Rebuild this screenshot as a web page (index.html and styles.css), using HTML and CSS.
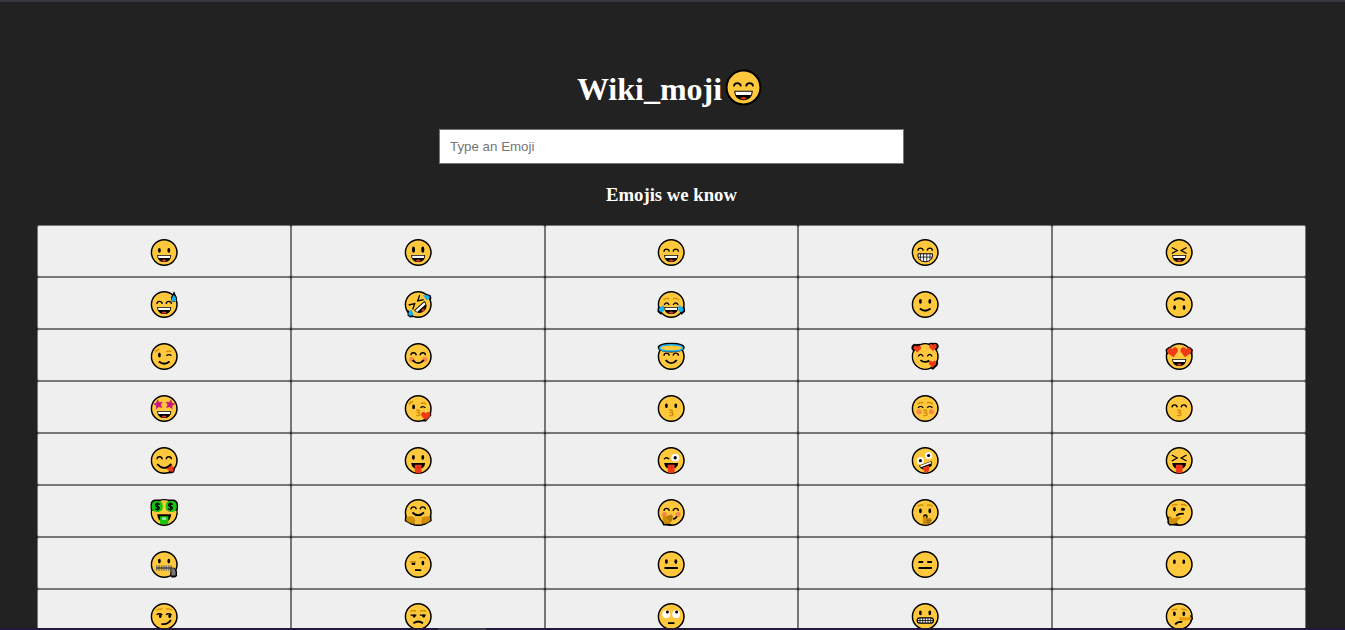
FILE: index.html
```html
<!DOCTYPE html>
<html lang="en">
<head>
<meta charset="utf-8">
<title>Wiki_moji</title>
<link rel="stylesheet" href="styles.css">
</head>
<body>
<svg class="defs" aria-hidden="true">
  <defs>
    <circle id="face" cx="14" cy="14" r="12.8" fill="#ffc83d" stroke="#000" stroke-width="1.5"/>
    <g id="eyes"><ellipse cx="9.2" cy="11.9" rx="1.4" ry="2.3"/><ellipse cx="18.6" cy="11.9" rx="1.4" ry="2.3"/></g>
    <g id="tall"><ellipse cx="9.3" cy="11.1" rx="1.5" ry="3.2"/><ellipse cx="18.6" cy="11.1" rx="1.5" ry="3.2"/></g>
    <path id="happy" class="ln" d="M6.7 13.2C7 9.8 11.6 9.8 12.1 13.2M15.9 13.2C16.4 9.8 21 9.8 21.3 13.2"/>
    <path id="squint" class="ln" d="M6.6 9L12 12L6.6 15M21.4 9L16 12L21.4 15"/>
    <g id="grin"><path d="M7 16.4H21C21 20.7 18.2 23.6 14 23.6S7 20.7 7 16.4Z"/><path d="M7.8 17.2H20.2L19.7 19.6H8.3Z" fill="#fff"/><path d="M11.4 22.4Q14 19.8 16.6 22.4Q14 23.7 11.4 22.4Z" fill="#f03a17"/></g>
    <path id="smile" class="ln th" d="M8.6 18Q14 22.4 19.4 18"/>
    <path id="bigsmile" class="ln th" d="M8.4 17.6Q14 23.6 19.6 17.6"/>
    <path id="brows" class="br" d="M6.4 8.9Q8.5 7 12.2 7.8M21.6 8.9Q19.5 7 15.8 7.8"/>
    <path id="kiss" class="br" d="M12 15.7H14.6Q16.5 17.1 13.7 18.1Q17 18.8 15.3 20.7Q14 21.5 12 20.9"/>
    <path id="heart" d="M0 3.6L-3.5 .2C-4.6-1.6-3-3.7-1.1-3.1L0-2.2L1.1-3.1C3-3.7 4.6-1.6 3.5 .2Z" fill="#f03a17"/>
    <path id="star" d="M0-5L1.5-1.7L5-1.3L2.4 1.1L3.3 4.6L0 2.9L-3.3 4.6L-2.4 1.1L-5-1.3L-1.5-1.7Z" fill="#c8177e"/>
    <g id="tongue"><path d="M7 16.5H21Q20.8 20 18.2 21.7H9.8Q7.2 20 7 16.5Z"/><path d="M10.6 18.3H17.4V24.2Q17.2 26.8 14 26.8T10.6 24.2Z" fill="#f03a17"/><path d="M14 19.8V22.5" stroke="#bd1d14" stroke-width=".8"/></g>
  </defs>
</svg>

<div class="edge-top"></div>
<main class="page">
  <h1 class="title"><span class="title-text">Wiki_moji</span><svg class="title-emoji" viewBox="0 0 28 28"><use href="#face"/><use href="#happy"/><use href="#grin"/></svg></h1>
  <input class="search" type="text" placeholder="Type an Emoji">
  <h3 class="subtitle">Emojis we know</h3>
  <div class="grid">
    <button class="cell"><svg class="emoji" viewBox="0 0 28 28"><use href="#face"/><use href="#eyes"/><use href="#grin"/></svg></button>
    <button class="cell"><svg class="emoji" viewBox="0 0 28 28"><use href="#face"/><use href="#tall"/><use href="#grin"/></svg></button>
    <button class="cell"><svg class="emoji" viewBox="0 0 28 28"><use href="#face"/><use href="#happy"/><use href="#grin"/></svg></button>
    <button class="cell"><svg class="emoji" viewBox="0 0 28 28"><use href="#face"/><use href="#happy" y="-1"/><path d="M6.8 15.3H21.2V18C20.8 25 7.2 25 6.8 18Z" fill="#fff" stroke="#000"/><path d="M7 18.6H21M9.2 15V21.5M12.4 15V23M15.6 15V23M18.8 15V21.5" fill="none" stroke="#000" stroke-width=".8"/></svg></button>
    <button class="cell"><svg class="emoji" viewBox="0 0 28 28"><use href="#face"/><use href="#squint"/><use href="#grin"/></svg></button>

    <button class="cell"><svg class="emoji" viewBox="0 0 28 28"><use href="#face"/><use href="#happy" y=".2"/><use href="#grin"/><path d="M23.8 .8L20.8 7Q20.5 11.2 23.7 11.4Q27.4 10.7 26.7 7Z"/><path d="M23.7 4.4Q20.6 8.2 21.5 9.7Q23.7 12.3 25.9 9.8Q26.5 7.7 23.7 4.4Z" fill="#18aef2"/></svg></button>
    <button class="cell"><svg class="emoji" viewBox="0 0 28 28"><use href="#face"/><g transform="rotate(-42 14 14)"><use href="#squint" y="-1"/><use href="#grin" y="-.8"/></g><path d="M22 3L26.7 5L27.2 8.3L25.5 10ZM3.5 19L3.3 25L5.8 27L9.5 26.4Z"/><path d="M18.7 4.9Q24.6 3.6 25.6 6.4Q25.4 9.3 22.6 9.4ZM7 19Q3.4 21.7 4.5 24.7Q8.2 26.4 9.1 23.2Z" fill="#18aef2"/></svg></button>
    <button class="cell"><svg class="emoji" viewBox="0 0 28 28"><use href="#face"/><use href="#brows" y=".3"/><path class="ln" d="M7 14.4Q9.4 10.5 12 14.4M16 14.4Q18.6 10.5 21 14.4"/><use href="#grin"/><path d="M1.4 15L.2 18.5V21.3L4 24.5L5 20ZM26.6 15L27.8 18.5V21.3L24 24.5L23 20Z"/><path d="M6.8 14.8Q1.2 16.7 1.6 19.8Q4.8 23.8 7 19.5ZM21.2 14.8Q26.8 16.7 26.4 19.8Q23.2 23.8 21 19.5Z" fill="#18aef2"/></svg></button>
    <button class="cell"><svg class="emoji" viewBox="0 0 28 28"><use href="#face"/><use href="#eyes" y="-1"/><use href="#smile"/></svg></button>
    <button class="cell"><svg class="emoji" viewBox="0 0 28 28"><use href="#face"/><g transform="rotate(180 14 14)"><use href="#eyes" y="-1"/><use href="#smile"/></g></svg></button>

    <button class="cell"><svg class="emoji" viewBox="0 0 28 28"><use href="#face"/><path class="br" d="M5.2 10Q6.1 7.2 9.2 6.7M16.2 9.2Q18.5 7.8 21.2 9.2"/><ellipse cx="9.2" cy="12.5" rx="1.4" ry="2.5"/><path class="ln" d="M16.2 13.3Q18.8 10.8 21.2 13.3"/><use href="#smile" y="1"/></svg></button>
    <button class="cell"><svg class="emoji" viewBox="0 0 28 28"><use href="#face"/><g fill="#f7894a"><circle cx="7.5" cy="17" r="2.6"/><circle cx="20.5" cy="17" r="2.6"/></g><use href="#happy" y="-.4"/><use href="#bigsmile"/></svg></button>
    <button class="cell"><svg class="emoji" viewBox="0 0 28 28"><use href="#face"/><ellipse cx="14" cy="5" rx="12.4" ry="3.8" fill="#ffc83d" stroke="#000" stroke-width="2.2"/><ellipse cx="14" cy="5.4" rx="11.5" ry="3.2" fill="#ffc83d" stroke="#18aef2" stroke-width="1.5"/><use href="#happy"/><use href="#bigsmile"/></svg></button>
    <button class="cell"><svg class="emoji" viewBox="0 0 28 28"><use href="#face"/><g stroke="#000" stroke-width="3.2" stroke-linejoin="round"><use href="#heart" x="5.6" y="6.2"/><use href="#heart" x="22" y="4.8"/><use href="#heart" x="21.5" y="21.8"/></g><circle cx="14" cy="14" r="11.9" fill="#ffc83d"/><use href="#heart" x="6" y="6.4"/><use href="#heart" x="21.8" y="4.8"/><use href="#heart" x="21.3" y="21.5"/><path class="ln" d="M7 14Q9.4 9.7 12 14M16 14Q18.6 9.7 21 14"/><path class="ln th" d="M9.2 17.6Q13.5 21 18 18"/></svg></button>
    <button class="cell"><svg class="emoji" viewBox="0 0 28 28"><use href="#face"/><path d="M1.1 13L.3 7L4 4L4 10ZM26.9 13L27.7 7L24 4L24 10Z"/><use href="#heart" transform="translate(7.5 9.7) rotate(-8) scale(1.42)"/><use href="#heart" transform="translate(20.5 9.7) rotate(8) scale(1.42)"/><use href="#grin"/></svg></button>

    <button class="cell"><svg class="emoji" viewBox="0 0 28 28"><use href="#face"/><use href="#star" transform="translate(8 9.6) rotate(-12)"/><use href="#star" transform="translate(20 9.6) rotate(12)"/><use href="#grin"/></svg></button>
    <button class="cell"><svg class="emoji" viewBox="0 0 28 28"><use href="#face"/><path class="br" d="M5 10Q5.7 7.4 8.8 7M16.6 9.2Q18.7 7.7 22 9.4"/><ellipse cx="9.4" cy="12.4" rx="1.4" ry="2.4"/><path class="ln" d="M16.2 13.4Q18.8 10.8 21.2 13.4"/><use href="#kiss"/><path d="M27 17V21L21.8 27L18 27Z"/><use href="#heart" transform="translate(21.6 21.4) scale(1.2)"/></svg></button>
    <button class="cell"><svg class="emoji" viewBox="0 0 28 28"><use href="#face"/><use href="#eyes" y="-.7"/><use href="#kiss"/></svg></button>
    <button class="cell"><svg class="emoji" viewBox="0 0 28 28"><use href="#face"/><use href="#brows" y=".5"/><path class="ln" d="M6.8 13.3Q9.4 10.5 12 13.3M16 13.3Q18.6 10.5 21.2 13.3"/><g fill="#f7894a"><circle cx="7.8" cy="17.3" r="2.6"/><circle cx="20.2" cy="17.3" r="2.6"/></g><use href="#kiss"/></svg></button>
    <button class="cell"><svg class="emoji" viewBox="0 0 28 28"><use href="#face"/><use href="#happy" y="-.3"/><use href="#kiss"/></svg></button>

    <button class="cell"><svg class="emoji" viewBox="0 0 28 28"><use href="#face"/><use href="#happy" y="-.4"/><path d="M20 24L24.4 20.3Q25.4 23.8 23.6 26Q20.5 27.6 17 26.6Z"/><path d="M16 21.9L22 18.8Q24.3 22.8 22.9 24.9Q19.5 26 16 21.9Z" fill="#f03a17"/><path class="ln th" d="M7 17.5Q13.5 25.3 21.3 17.5"/></svg></button>
    <button class="cell"><svg class="emoji" viewBox="0 0 28 28"><use href="#face"/><use href="#eyes" y="-1"/><use href="#tongue"/></svg></button>
    <button class="cell"><svg class="emoji" viewBox="0 0 28 28"><use href="#face"/><path class="ln" d="M6.7 12.6Q9.4 10 12 12.6"/><circle cx="18" cy="11.2" r="3.9" fill="#fff"/><circle cx="18" cy="11.2" r="1.7"/><use href="#tongue"/></svg></button>
    <button class="cell"><svg class="emoji" viewBox="0 0 28 28"><use href="#face"/><g fill="#fff"><circle cx="9.2" cy="14.2" r="3.6"/><circle cx="17.4" cy="9" r="3.6"/></g><circle cx="9.2" cy="14.2" r="1.6"/><circle cx="17.4" cy="9" r="1.6"/><g transform="rotate(-20 14 19)"><path d="M8 17H21.5Q21.2 21 18.7 22H10.5Q8.2 20.2 8 17Z"/><path d="M9 17.4H20.6V19.1H9.3Z" fill="#fff"/></g><path d="M11.4 21L17.8 19V23.7Q17.5 26 14.8 26.2Q12.5 26 11.4 21Z" fill="#f03a17"/></svg></button>
    <button class="cell"><svg class="emoji" viewBox="0 0 28 28"><use href="#face"/><use href="#squint" y="-.5"/><use href="#tongue"/></svg></button>

    <button class="cell"><svg class="emoji" viewBox="0 0 28 28"><use href="#face"/><rect x=".2" y="1" width="13.6" height="13.4" rx="5"/><rect x="14.2" y="1" width="13.6" height="13.4" rx="5"/><path d="M10 2.3L14 1.8L18 2.3L17 9L26.3 12.5Q26 18.5 23 22L5 22Q1.8 18 1.7 12.5L11 9Z" fill="#ffc83d"/><rect x="1.5" y="2.4" width="11" height="11" rx="4.5" fill="#16c60c"/><rect x="15.5" y="2.4" width="11" height="11" rx="4.5" fill="#16c60c"/><path class="ln" d="M9.6 5.9Q5.2 4.2 5.3 6.7Q5.5 7.9 7.2 8Q9.7 8.7 8.9 10.2Q7.4 11.7 4.8 10.3M7.3 4V12.2M22.6 5.9Q18.2 4.2 18.3 6.7Q18.5 7.9 20.2 8Q22.7 8.7 21.9 10.2Q20.4 11.7 17.8 10.3M20.3 4V12.2"/><path d="M7 15.8H21Q20.5 20.6 18 22.3H10Q7.5 20.6 7 15.8Z"/><path d="M9.9 17.7H18.1V25.5H9.9Z" fill="#16c60c"/><rect x="12" y="18.8" width="4" height="2.6" fill="#a4e8a0"/></svg></button>
    <button class="cell"><svg class="emoji" viewBox="0 0 28 28"><use href="#face"/><use href="#happy" y="-2.3"/><path class="ln th" d="M8.2 14Q14 19.6 19.8 14"/><path d="M.8 17L3 21H25L27.2 17L27.5 22.5L21 26.3Q14 28.3 7 26.3L.5 22.5Z"/><path d="M2 19Q6 16.5 10.4 19L10.6 25.6Q5.5 25.4 2 22ZM26 19Q22 16.5 17.6 19L17.4 25.6Q22.5 25.4 26 22Z" fill="#d18d00"/><path d="M10.4 18H17.6V26H10.4Z" fill="#f4ba35"/></svg></button>
    <button class="cell"><svg class="emoji" viewBox="0 0 28 28"><use href="#face"/><use href="#happy" y="-.8"/><g fill="#f7894a"><circle cx="7.3" cy="16" r="2.6"/><circle cx="20.7" cy="16" r="2.6"/></g><path class="ln th" d="M16 20.5Q18.6 20 19.7 17.8"/><path d="M4.2 23L6 26.9H13L14.5 25.8Z"/><path d="M6.2 16.2L9 18L14.6 15.7L15.8 19.3L14.2 23.2Q12 26 7.2 25.4Q4.7 21 6.2 16.2Z" fill="#d18d00"/><path d="M9.5 19.4L13.5 16.7M10.7 21L15.5 17.5M12.2 22.4L15.2 20" fill="none" stroke="#70531b" stroke-width=".7"/></svg></button>
    <button class="cell"><svg class="emoji" viewBox="0 0 28 28"><use href="#face"/><use href="#brows" y="-1"/><use href="#eyes" y=".5"/><circle cx="14.2" cy="18" r="2.3"/><path d="M12.8 17.5H15.2V20L20.7 21.2L19.7 25L15.5 26.1L11.5 25.8V21Z" fill="#d18d00"/><path d="M15.3 20.4H20.2M15.3 22.2H20M15 24H18.5" fill="none" stroke="#70531b" stroke-width=".8"/></svg></button>
    <button class="cell"><svg class="emoji" viewBox="0 0 28 28"><use href="#face"/><use href="#brows" y="-1.5"/><ellipse cx="9.3" cy="10.8" rx="1.4" ry="2.3"/><ellipse cx="17.8" cy="10.8" rx="2" ry="1.5"/><path class="ln th" d="M11 17.2Q14.5 14.5 18.6 15.3"/><path d="M2.2 17.5L2.2 24.6L4 27H11L14 26.3Z"/><path d="M3.8 17.2Q6.5 17.4 7.2 20L14.5 18.3Q16.2 18.7 15.2 20.3L12.7 21.4L11.5 24.6Q9 26 4.5 25.4Q3.2 24 3.8 17.2Z" fill="#d18d00"/></svg></button>

    <button class="cell"><svg class="emoji" viewBox="0 0 28 28"><use href="#face"/><use href="#eyes" y="-1.3"/><path d="M6.6 14.7V20.3M9 14.7V20.3M11.4 14.7V20.3M13.8 14.7V20.3M16.2 14.7V20.3M18.6 14.7V20.3M21 14.7V20.3" stroke="#777" stroke-width="1.4"/><path d="M6 17.4H22" stroke="#444" stroke-width="1.5"/><path d="M20.6 17.2H24.4L26.8 21V25.5L24.9 27H21.5L19.8 25.2Z"/><path d="M21 17.8H24L25.4 21.5V25H21.2V22Z" fill="#777"/></svg></button>
    <button class="cell"><svg class="emoji" viewBox="0 0 28 28"><use href="#face"/><path class="br" d="M5.8 11.3H11.8M15.3 7.8Q18.2 5.8 21.8 8.1"/><path d="M7.3 12.2H11.1V13.7Q9.2 15.4 7.3 13.7Z"/><ellipse cx="18.7" cy="12.6" rx="1.4" ry="2.4"/><path class="ln th" d="M10.8 19.7H17"/></svg></button>
    <button class="cell"><svg class="emoji" viewBox="0 0 28 28"><use href="#face"/><use href="#eyes" y="-.8"/><path class="ln th" d="M7.3 17.5H20.7"/></svg></button>
    <button class="cell"><svg class="emoji" viewBox="0 0 28 28"><use href="#face"/><path class="ln th" d="M7.3 11.5H12M16 11.5H20.7M7.3 17.5H20.7"/></svg></button>
    <button class="cell"><svg class="emoji" viewBox="0 0 28 28"><use href="#face"/><use href="#eyes" y="-.6"/></svg></button>

    <button class="cell"><svg class="emoji" viewBox="0 0 28 28"><use href="#face"/><use href="#brows" y="-1.2"/><path class="ln" d="M6.4 12.2Q9 10.2 12.2 12.4M15.8 12.2Q18.4 10.2 21.4 12.4"/><ellipse cx="10" cy="13.6" rx="1.4" ry="1.9"/><ellipse cx="19.5" cy="13.6" rx="1.4" ry="1.9"/><path class="ln th" d="M11.2 21.4Q17.5 22.6 20.7 17.6"/></svg></button>
    <button class="cell"><svg class="emoji" viewBox="0 0 28 28"><use href="#face"/><path class="br" d="M6 8.8Q9 7.2 11.8 8.8M16 8.8Q19 7.2 21.8 8.8"/><path class="ln" d="M6.4 12.6H12.2M15.6 12.6H21.5"/><ellipse cx="10" cy="13.6" rx="1.5" ry="1.5"/><ellipse cx="19.5" cy="13.6" rx="1.5" ry="1.5"/><path class="ln th" d="M9.2 20.8Q14 17.2 18.8 20.8"/></svg></button>
    <button class="cell"><svg class="emoji" viewBox="0 0 28 28"><use href="#face"/><g fill="#fff"><circle cx="9" cy="11.7" r="3.9"/><circle cx="18.9" cy="11.7" r="3.9"/></g><circle cx="10.2" cy="9.5" r="1.5"/><circle cx="19.4" cy="9.5" r="1.5"/><path class="ln th" d="M10.8 20.7H17.2"/></svg></button>
    <button class="cell"><svg class="emoji" viewBox="0 0 28 28"><use href="#face"/><use href="#eyes" y="-1.5"/><rect x="6" y="15.3" width="16.2" height="5.4" rx="2.6" fill="#fff" stroke="#000" stroke-width="1.2"/><path d="M6 18H22M8.8 15.3V20.7M11.5 15.3V20.7M14.1 15.3V20.7M16.8 15.3V20.7M19.5 15.3V20.7" fill="none" stroke="#000" stroke-width=".8"/></svg></button>
    <button class="cell"><svg class="emoji" viewBox="0 0 28 28"><use href="#face"/><use href="#brows" y="-.8"/><use href="#eyes" y="-.6"/><path d="M25 12L28 16L25.5 20Z"/><path d="M14.3 14.2Q19 15.3 25.8 14.8Q27 15.6 25.8 17.2Q19 18.6 14.3 17.7Z" fill="#e59c08"/><path class="ln th" d="M10 22Q12 18.8 17 19.4"/></svg></button>
  </div>
</main>
<div class="edge-bottom"><div class="edge-thumb"></div></div>
</body>
</html>
```
FILE: styles.css
```css
* { box-sizing: border-box; }
body {
  margin: 0;
  height: 630px;
  display: flex;
  flex-direction: column;
  overflow: hidden;
  background: #222;
  color: #fff;
  font-family: "Liberation Serif", "Times New Roman", serif;
}
.defs { display: block; width: 0; height: 0; flex: none; }
.edge-top { flex: none; height: 2px; background: #36363c; }
.edge-bottom { flex: none; height: 2px; background: #21183a; padding-left: 438px; }
.edge-thumb { width: 48px; height: 2px; background: #3f3b50; }
.page {
  flex: 1;
  min-height: 0;
  overflow: hidden;
  display: flex;
  flex-direction: column;
  align-items: center;
  padding: 66px 39px 0 37px;
}
.title {
  flex: none;
  display: flex;
  align-items: center;
  height: 40px;
  margin: 0 0 21px;
  padding-right: 4px;
  font-size: 32px;
  line-height: 40px;
}
.title-text { padding-top: 1px; }
.title-emoji { width: 37px; height: 37px; margin: 0 0 2px 3px; }
.search {
  flex: none;
  width: 465px;
  height: 35px;
  padding: 0 10px;
  border: 1px solid #767676;
  background: #fff;
  font: 13.333px "Liberation Sans", Arial, sans-serif;
}
.search::placeholder { color: #757575; }
.subtitle { flex: none; margin: 20px 0 19px; height: 22px; font-size: 18.72px; line-height: 22px; }
.grid {
  flex: none;
  align-self: stretch;
  display: grid;
  grid-template-columns: repeat(5, 1fr);
  grid-auto-rows: 52px;
}
.cell {
  display: flex;
  align-items: center;
  justify-content: center;
  padding: 3px 0 0;
  border: 1px solid #767676;
  border-radius: 2px;
  background: #efefef;
}
.emoji { width: 28px; height: 28px; transform: translate(.2px, -.5px); }
.ln { fill: none; stroke: #000; stroke-width: 1.3; }
.th { stroke-width: 1.8; }
.br { fill: none; stroke: #d18d00; stroke-width: 1.4; }
```
